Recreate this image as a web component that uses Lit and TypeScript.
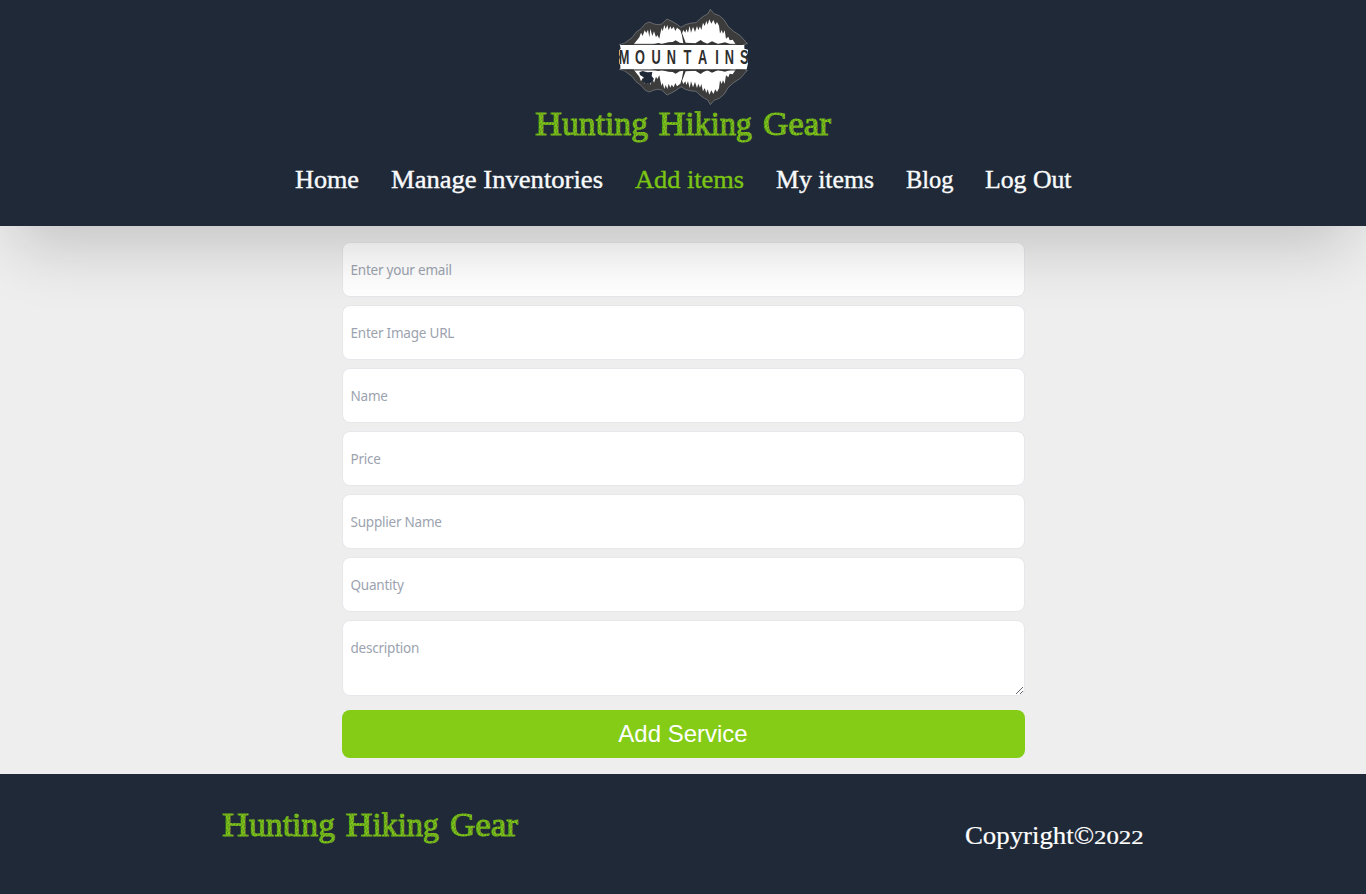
import { LitElement, html, svg, css } from "lit";
import { customElement, property } from "lit/decorators.js";

@customElement("mountain-logo")
class MountainLogo extends LitElement {
  static styles = css`
    :host { display: block; height: 110px; }
    svg { display: block; }
    .word { font: bold 58px "Liberation Sans", sans-serif; fill: #2e2e2e; text-anchor: middle; }
    .rock { fill: #3c3c3c; stroke: #8b8f94; stroke-width: 1.8; }
    .snow { fill: #fff; }
  `;
  render() {
    const letters: [string, number][] = [["M", 48], ["O", 96], ["U", 144], ["N", 190], ["T", 238], ["A", 284], ["I", 327], ["N", 364], ["S", 409]];
    const rock = "M34 134 L50 129 L72 113 L84 97 L99 86 L112 71 L124 66 L138 72 L150 74 L161 72 L177 57 L192 64 L207 73 L219 82 L232 74 L250 69 L264 68 L278 55 L289 47 L299 42 L307 28 L318 41 L334 47 L349 60 L360 79 L377 94 L397 107 L418 131 L398 136 L60 136 Z";
    const snow = "M76 134 L94 112 L99 98 L104 108 L110 91 L115 99 L120 89 L124 112 L127 86 L133 108 L138 94 L144 112 L148 105 L154 116 L157 100 L161 84 L164 94 L169 75 L173 87 L178 75 L182 91 L187 79 L191 88 L197 80 L202 93 L207 83 L217 91 L221 103 L226 90 L232 98 L235 87 L240 98 L245 78 L249 98 L255 80 L261 96 L267 78 L271 91 L276 79 L280 90 L285 68 L290 78 L295 63 L299 74 L304 58 L310 71 L316 60 L322 74 L327 66 L333 77 L336 101 L341 90 L345 101 L350 91 L354 116 L361 110 L365 121 L374 119 L384 134 Z";
    const ridge = "M130 134 L151 129 L161 132 L181 127 L194 126 L203 121 L215 128 L226 130 L219 91 L233 128 L262 130 L278 120 L286 126 L298 131 L312 124 L330 132 L351 127 L372 134 Z";
    const half = svg`<path class="rock" d=${rock}></path><path class="snow" d=${snow}></path><path d=${ridge} fill="#353535"></path>`;
    return html`<svg width="150" height="110" viewBox="0 0 450 330" role="img" aria-label="Mountains">
      <g>${half}</g>
      <g transform="translate(0 342) scale(1 -1)">${half}</g>
      <path d="M36 135H409V146L420 149V160L412 170L420 178V190L416 208H37V195L33 190V180L36 171L33 164V151L38 147Z" fill="#fff"></path>
      <path d="M40 133H405M40 210H412" stroke="#303236" stroke-width="3"></path>
      <path d="M94 217L104 213L118 217L133 216L131 228L138 237L127 250L112 251L103 242L107 232L96 225Z" fill="#202938"></path>
      ${letters.map(([c, x]) => svg`<text class="word" transform="translate(${x} 193) scale(.66 1)">${c}</text>`)}
    </svg>`;
  }
}

@customElement("fit-text")
class FitText extends LitElement {
  @property() text = "";
  @property({ type: Number }) w = 100;
  @property({ type: Number }) size = 26;
  @property({ type: Number }) h = 32;
  @property({ type: Number }) base = 24;
  @property({ type: Number }) weight = 0.4;
  static styles = css`
    :host { display: block; }
    svg { display: block; overflow: visible; }
    text { font-family: "Liberation Serif", serif; fill: currentColor; stroke: currentColor; }
  `;
  render() {
    return html`<svg width=${this.w} height=${this.h}><text x="0" y=${this.base} font-size=${this.size} stroke-width=${this.weight} textLength=${this.w} lengthAdjust="spacingAndGlyphs">${this.text}</text></svg>`;
  }
}

@customElement("brand-name")
class BrandName extends LitElement {
  static styles = css`
    :host { display: block; width: 297px; height: 40px; }
    svg { display: block; overflow: visible; }
    text { font: 34px "Liberation Serif", serif; fill: url(#sketch); stroke: url(#sketch); stroke-width: 1; }
  `;
  render() {
    const parts: [string, number, number][] = [["H", 0, 27], ["unting", 27, 86], ["H", 123.5, 27], ["iking", 150.5, 66.5], ["Gear", 228, 68]];
    return html`<svg width="297" height="40" role="img" aria-label="Hunting Hiking Gear">
      <defs><pattern id="sketch" width="3" height="5" patternUnits="userSpaceOnUse" patternTransform="rotate(14)">
        <rect width="3" height="5" fill="#84cc16"></rect><path d="M1 0V2.4M2.5 2.5V4.4" stroke="#3a6228" stroke-width="0.8"></path>
      </pattern></defs>
      ${parts.map(([t, x, w]) => svg`<text x=${x} y="29" textLength=${w} lengthAdjust="spacingAndGlyphs">${t}</text>`)}
    </svg>`;
  }
}

@customElement("app-root")
class AppRoot extends LitElement {
  static styles = css`
    :host { display: block; height: 894px; background: #eee; overflow: hidden; }
    * { box-sizing: border-box; }
    header { position: relative; z-index: 1; height: 226px; background: #202937; display: flex; flex-direction: column; align-items: center; box-shadow: 0 35px 60px -15px rgba(0, 0, 0, 0.18); pointer-events: none; }
    mountain-logo { margin-bottom: -4px; }
    nav { display: flex; gap: 32px; margin-top: 18px; color: #f8fafc; }
    nav a { pointer-events: auto; }
    .active { color: #7ac514; }
    form { width: 683px; margin: 16px auto; display: flex; flex-direction: column; gap: 8px; }
    input, textarea { display: block; width: 100%; height: 55px; margin: 0; padding: 0 8px; border: 1px solid #e5e7eb; border-radius: 8px; background: #fff; font: 13.5px/20px "Noto Sans", sans-serif; letter-spacing: -0.22px; outline: none; }
    textarea { height: 76px; padding-top: 17px; resize: vertical; }
    ::placeholder { color: #9ca3af; opacity: 1; }
    button { height: 48px; margin-top: 6px; border: 0; border-radius: 8px; background: #84cc16; color: #fff; font: 24px "Liberation Sans", sans-serif; padding: 0; }
    footer { height: 120px; background: #202937; display: flex; justify-content: space-between; padding: 33px 223px 0 222px; color: #fff; }
    .copy { display: flex; margin-top: 12px; }
  `;
  render() {
    const links: [string, number][] = [["Home", 64], ["Manage Inventories", 212], ["Add items", 109], ["My items", 98], ["Blog", 47.5], ["Log Out", 86.5]];
    const fields = ["Enter your email", "Enter Image URL", "Name", "Price", "Supplier Name", "Quantity"];
    return html`
      <header>
        <mountain-logo></mountain-logo>
        <brand-name></brand-name>
        <nav>${links.map(([t, w]) => html`<a class=${t === "Add items" ? "active" : ""}><fit-text .text=${t} .w=${w}></fit-text></a>`)}</nav>
      </header>
      <form>
        ${fields.map((p) => html`<input placeholder=${p} />`)}
        <textarea placeholder="description"></textarea>
        <button type="button">Add Service</button>
      </form>
      <footer>
        <brand-name></brand-name>
        <div class="copy">
          <fit-text .text=${"Copyright©"} .w=${129} .size=${25.5} .base=${25} .weight=${0.2}></fit-text>
          <fit-text .text=${"2022"} .w=${49.5} .size=${19} .base=${25} .weight=${0.2}></fit-text>
        </div>
      </footer>`;
  }
}
